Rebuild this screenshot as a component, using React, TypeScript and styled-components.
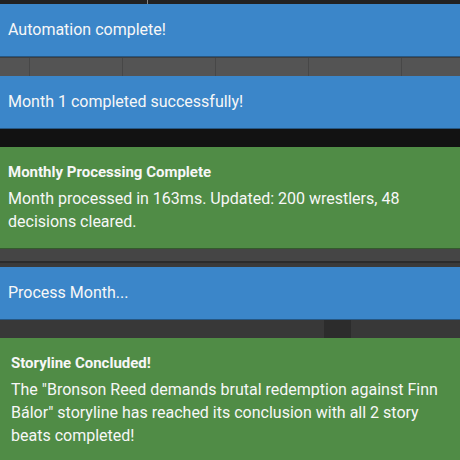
import React from 'react';
import styled, { createGlobalStyle } from 'styled-components';

const GlobalStyle = createGlobalStyle`
  html, body {
    margin: 0;
    padding: 0;
    background: #232323;
    font-family: Roboto, "Liberation Sans", sans-serif;
    overflow: hidden;
  }
`;

const Screen = styled.div`
  width: 460px;
  height: 460px;
  display: flex;
  flex-direction: column;
  overflow: hidden;
  background: #232323;
`;

// the app's tab bar, almost entirely hidden behind the toast stack
const TopNav = styled.div`
  height: 4px;
  flex: none;
  overflow: hidden;
  background: #222;
`;

const NavRow = styled.div`
  display: flex;
  align-items: center;
  gap: 20px;
  padding-left: 10px;
  height: 16px;
  margin-top: -12px;
  font-size: 12px;
  color: #c8c8c8;
`;

const NavDivider = styled.span`
  width: 1px;
  height: 16px;
  background: #888;
  margin-right: 24px;
`;

const NavTab = styled.span<{ $gapBefore?: number }>`
  margin-left: ${({ $gapBefore }) => $gapBefore ?? 0}px;
  white-space: nowrap;
`;

const Toast = styled.div<{ $tone: 'info' | 'success'; $inset?: number }>`
  flex: none;
  background: ${({ $tone }) => ($tone === 'info' ? '#3b86c9' : '#508c46')};
  color: #f7f7f7;
  padding: ${({ $tone }) => ($tone === 'info' ? 14 : 15)}px ${({ $inset }) => $inset ?? 8}px 15px;
  border-bottom: 1px solid rgba(0, 0, 0, 0.35);
`;

const Message = styled.div`
  font-size: 16px;
  line-height: 23px;
`;

const Title = styled.div`
  font-size: 15px;
  font-weight: 700;
  line-height: 20px;
  margin-bottom: 5px;
`;

const GridBand = styled.div`
  flex: none;
  height: 18px;
  background: #545454;
  border-top: 1px solid #3f3f3f;
  display: grid;
  grid-template-columns: 30px repeat(4, 93px) 1fr;
`;

const GridCell = styled.div`
  border-right: 1px solid #474747;
  &:last-child {
    border-right: none;
  }
`;

const PlainBand = styled.div<{ $bg: string; $h: number }>`
  flex: none;
  height: ${({ $h }) => $h}px;
  background: ${({ $bg }) => $bg};
`;

const LinedBand = styled.div`
  flex: none;
  height: 18px;
  background: #454545;
  display: flex;
  flex-direction: column;
  justify-content: flex-end;
`;

const LinedBandFoot = styled.div`
  height: 4px;
  border-top: 2px solid #2b2b2b;
  background: #3a3a3a;
`;

const BlockBand = styled.div`
  flex: none;
  height: 18px;
  background: #383838;
  display: grid;
  grid-template-columns: 324px 27px 1fr;
`;

const DarkBlock = styled.div`
  grid-column: 2;
  background: #2c2c2c;
`;

export default function App() {
  return (
    <Screen>
      <GlobalStyle />
      <TopNav>
        <NavRow>
          <NavTab>Tournaments</NavTab>
          <NavTab>Draft</NavTab>
          <NavDivider />
          <NavTab $gapBefore={24}>Power 25</NavTab>
          <NavTab>Market Pressure</NavTab>
        </NavRow>
      </TopNav>
      <Toast $tone="info">
        <Message>Automation complete!</Message>
      </Toast>
      <GridBand>
        <GridCell />
        <GridCell />
        <GridCell />
        <GridCell />
        <GridCell />
        <GridCell />
      </GridBand>
      <Toast $tone="info">
        <Message>Month 1 completed successfully!</Message>
      </Toast>
      <PlainBand $bg="#121212" $h={18} />
      <Toast $tone="success">
        <Title>Monthly Processing Complete</Title>
        <Message>Month processed in 163ms. Updated: 200 wrestlers, 48 decisions cleared.</Message>
      </Toast>
      <LinedBand>
        <LinedBandFoot />
      </LinedBand>
      <Toast $tone="info">
        <Message>Process Month...</Message>
      </Toast>
      <BlockBand>
        <DarkBlock />
      </BlockBand>
      <Toast $tone="success" $inset={11}>
        <Title>Storyline Concluded!</Title>
        <Message>
          The "Bronson Reed demands brutal redemption against Finn Bálor" storyline has reached its
          conclusion with all 2 story beats completed!
        </Message>
      </Toast>
    </Screen>
  );
}
